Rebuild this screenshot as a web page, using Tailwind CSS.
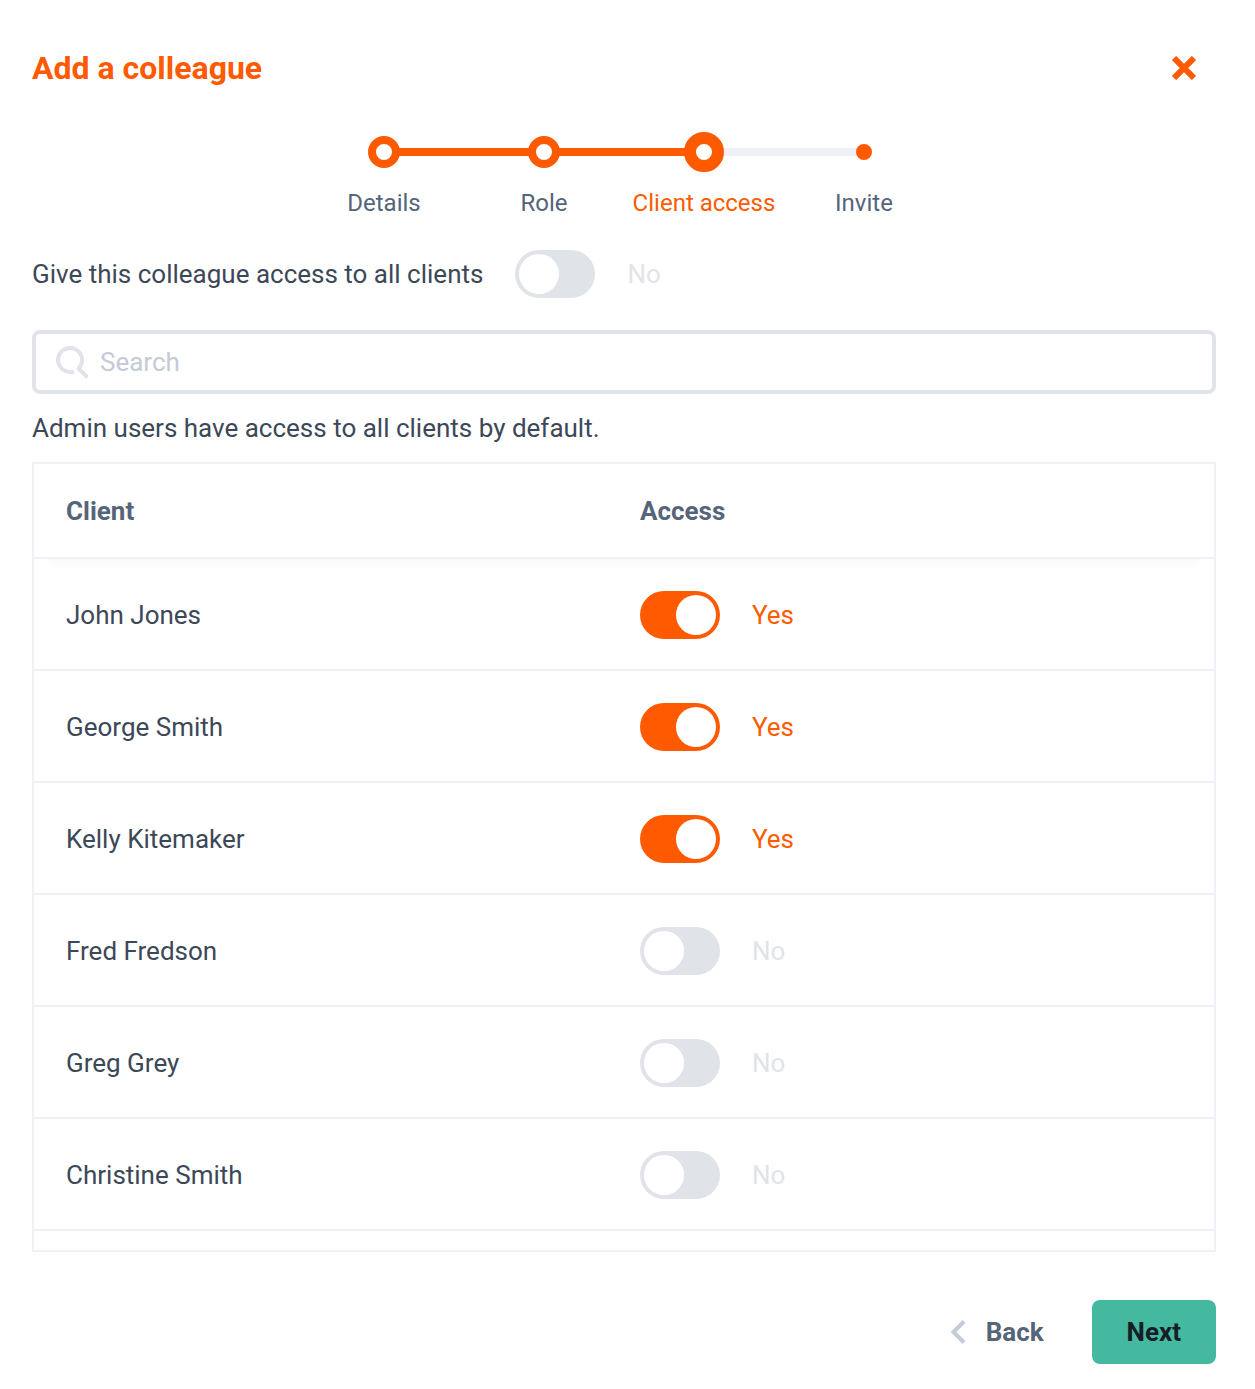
<!DOCTYPE html>
<html lang="en">
<head>
    <meta charset="UTF-8">
    <meta name="viewport" content="width=device-width, initial-scale=1.0">
    <title>Add a colleague</title>
    <script src="https://cdn.jsdelivr.net/npm/@tailwindcss/browser@4"></script>
</head>
<body class="bg-white">
    <main class="pt-11 pb-6 pl-8 pr-[39px] font-['Roboto',sans-serif] text-[26px] leading-9 text-[#3c4858]">

        <header class="flex items-center justify-between h-12 pr-4">
            <h1 class="text-[32px] font-bold text-[#ff5a00]">Add a colleague</h1>
            <button type="button" aria-label="Close" class="p-1">
                <svg class="w-6 h-6" viewBox="0 0 24 24" fill="none" stroke="#ff5a00" stroke-width="6">
                    <path d="M2 2L22 22M22 2L2 22" />
                </svg>
            </button>
        </header>

        <!-- steps -->
        <ol class="mt-10 flex justify-center text-2xl leading-[30px] text-center text-[#556579]">
            <li class="w-40">
                <div class="flex items-center h-10">
                    <span class="flex-1 h-2"></span>
                    <span class="relative z-10 -mx-1 size-8 rounded-full border-8 border-[#ff5a00] bg-white"></span>
                    <span class="flex-1 h-2 bg-[#ff5a00]"></span>
                </div>
                <p class="mt-4">Details</p>
            </li>
            <li class="w-40">
                <div class="flex items-center h-10">
                    <span class="flex-1 h-2 bg-[#ff5a00]"></span>
                    <span class="relative z-10 -mx-1 size-8 rounded-full border-8 border-[#ff5a00] bg-white"></span>
                    <span class="flex-1 h-2 bg-[#ff5a00]"></span>
                </div>
                <p class="mt-4">Role</p>
            </li>
            <li class="w-40" aria-current="step">
                <div class="flex items-center h-10">
                    <span class="flex-1 h-2 bg-[#ff5a00]"></span>
                    <span class="relative z-10 -mx-1 size-10 rounded-full border-12 border-[#ff5a00] bg-white"></span>
                    <span class="flex-1 h-2 bg-[#f0f1f6]"></span>
                </div>
                <p class="mt-4 text-[#ff5a00]">Client access</p>
            </li>
            <li class="w-40">
                <div class="flex items-center h-10">
                    <span class="flex-1 h-2 bg-[#f0f1f6]"></span>
                    <span class="relative z-10 -mx-1 size-4 rounded-full bg-[#ff5a00]"></span>
                    <span class="flex-1 h-2"></span>
                </div>
                <p class="mt-4">Invite</p>
            </li>
        </ol>

        <div class="mt-8 flex items-center gap-8 h-12">
            <label for="all-clients">Give this colleague access to all clients</label>
            <input type="checkbox" id="all-clients" class="toggle appearance-none shrink-0 w-20 h-12 p-1 rounded-full bg-[#e0e4e9] checked:bg-[#ff5a00] before:block before:size-10 before:rounded-full before:bg-white checked:before:translate-x-8">
            <span class="text-[#e0e4e9]">No</span>
        </div>

        <div class="mt-8 flex items-center gap-2 h-16 px-5 rounded-lg border-4 border-[#e0e4e9]">
            <svg class="size-9 shrink-0" viewBox="0 0 36 36" fill="none" stroke="#e0e4e9" stroke-width="4">
                <path d="M18 27.300A12 12 0 1 1 22.500 24.500" />
                <path d="M21.500 23.500L31.500 33.500" />
            </svg>
            <input type="search" aria-label="Search" placeholder="Search" class="flex-1 min-w-0 outline-none placeholder:text-[#c3cad8]">
        </div>

        <p class="py-4">Admin users have access to all clients by default.</p>

        <div class="border-2 border-[#f0f1f6] pb-[19px]">
            <table class="w-full border-separate border-spacing-0 text-left">
                <thead>
                    <tr class="relative text-[#556579] shadow-[0_16px_16px_-16px_rgba(0,0,0,0.06)]">
                        <th class="w-[574px] h-[95px] pl-8 border-b-2 border-[#f0f1f6] font-bold">Client</th>
                        <th class="pl-8 border-b-2 border-[#f0f1f6] font-bold">Access</th>
                    </tr>
                </thead>
                <tbody id="clients"></tbody>
            </table>
        </div>

        <footer class="mt-12 flex items-center justify-end gap-12 font-bold">
            <button type="button" class="flex items-center gap-5 h-16 text-[#556579]">
                <svg class="w-4 h-6" viewBox="0 0 16 24" fill="none" stroke="#c3cad8" stroke-width="4">
                    <path d="M14 1.500L3.500 12L14 22.500" />
                </svg>
                Back
            </button>
            <button type="button" class="h-16 px-[35px] rounded-lg bg-[#45b99f] text-[#161d26]">Next</button>
        </footer>
    </main>

<script>
    const clients = [
        { name: 'John Jones', access: true },
        { name: 'George Smith', access: true },
        { name: 'Kelly Kitemaker', access: true },
        { name: 'Fred Fredson', access: false },
        { name: 'Greg Grey', access: false },
        { name: 'Christine Smith', access: false }
    ]

    clients.forEach((client, i) => {
        const row = document.createElement('tr')
        row.innerHTML = `
            <td class="h-28 pt-0.5 pl-8 border-b-2 border-[#f0f1f6]"><label for="client-${i}">${client.name}</label></td>
            <td class="pt-0.5 pl-8 border-b-2 border-[#f0f1f6]">
                <div class="flex items-center gap-8">
                    <input type="checkbox" id="client-${i}" ${client.access ? 'checked' : ''} class="toggle appearance-none shrink-0 w-20 h-12 p-1 rounded-full bg-[#e0e4e9] checked:bg-[#ff5a00] before:block before:size-10 before:rounded-full before:bg-white checked:before:translate-x-8">
                    <span class="${client.access ? 'text-[#ff5a00]' : 'text-[#e0e4e9]'}">${client.access ? 'Yes' : 'No'}</span>
                </div>
            </td>
        `
        document.getElementById('clients').appendChild(row)
    })

    // keep the Yes / No text in step with its switch
    document.querySelectorAll('.toggle').forEach(toggle => {
        toggle.addEventListener('change', () => {
            const txt = toggle.nextElementSibling
            txt.textContent = toggle.checked ? 'Yes' : 'No'
            txt.className = toggle.checked ? 'text-[#ff5a00]' : 'text-[#e0e4e9]'
        })
    })
</script>
</body>
</html>
